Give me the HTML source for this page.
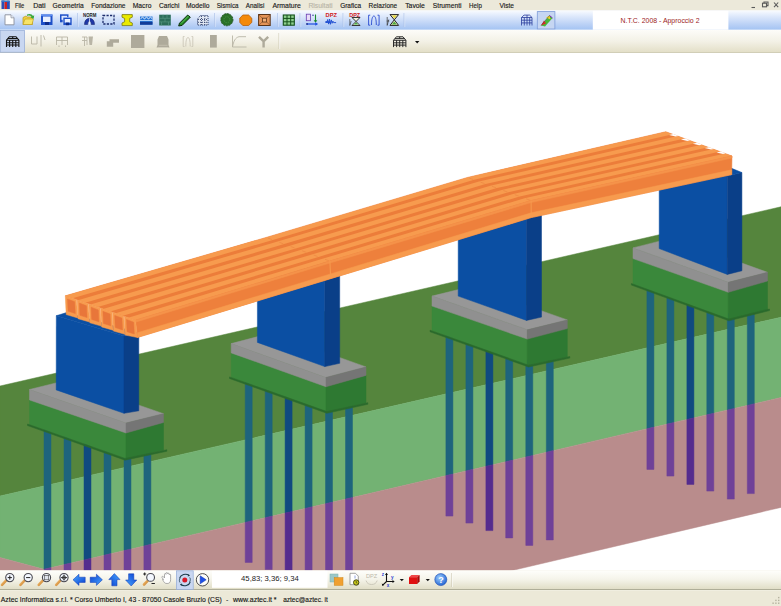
<!DOCTYPE html>
<html><head><meta charset="utf-8"><title>Aztec</title>
<style>
html,body{margin:0;padding:0;background:#fff;}
body{width:781px;height:606px;overflow:hidden;position:relative;font-family:"Liberation Sans","DejaVu Sans",sans-serif;}
svg text{font-family:"Liberation Sans","DejaVu Sans",sans-serif;}
#scene{position:absolute;left:0;top:0;width:781px;height:606px;}
</style></head><body>
<svg id="scene" width="781" height="606" viewBox="0 0 781 606">
<polygon points="0.0,386.0 781.0,206.8 781.0,317.2 0.0,496.0" fill="#55853d" stroke="#55853d" stroke-width="0.5" stroke-linejoin="round" />
<polygon points="0.0,496.0 781.0,317.2 781.0,397.5 44.0,569.3 0.0,557.5" fill="#73b273" stroke="#73b273" stroke-width="0.5" stroke-linejoin="round" />
<polygon points="0.0,557.5 44.0,569.3 781.0,397.5 781.0,507.4 510.0,571.0 0.0,571.0" fill="#b98c8c" stroke="#b98c8c" stroke-width="0.5" stroke-linejoin="round" />
<polygon points="44.0,426.0 51.0,426.0 51.0,567.6 44.0,569.2" fill="#1e647d" stroke="#1e647d" stroke-width="0.5" stroke-linejoin="round" />
<polygon points="44.0,569.2 51.0,567.6 51.0,580.0 44.0,580.0" fill="#6f4198" stroke="#6f4198" stroke-width="0.5" stroke-linejoin="round" />
<polygon points="64.0,433.0 71.0,433.0 71.0,563.0 64.0,564.6" fill="#1e647d" stroke="#1e647d" stroke-width="0.5" stroke-linejoin="round" />
<polygon points="64.0,564.6 71.0,563.0 71.0,580.0 64.0,580.0" fill="#6f4198" stroke="#6f4198" stroke-width="0.5" stroke-linejoin="round" />
<polygon points="84.0,440.0 91.0,440.0 91.0,558.3 84.0,559.9" fill="#104a80" stroke="#104a80" stroke-width="0.5" stroke-linejoin="round" />
<polygon points="84.0,559.9 91.0,558.3 91.0,580.0 84.0,580.0" fill="#552c8e" stroke="#552c8e" stroke-width="0.5" stroke-linejoin="round" />
<polygon points="104.0,447.0 111.0,447.0 111.0,553.6 104.0,555.3" fill="#1e647d" stroke="#1e647d" stroke-width="0.5" stroke-linejoin="round" />
<polygon points="104.0,555.3 111.0,553.6 111.0,580.0 104.0,580.0" fill="#6f4198" stroke="#6f4198" stroke-width="0.5" stroke-linejoin="round" />
<polygon points="124.0,452.9 131.0,452.9 131.0,549.0 124.0,550.6" fill="#1e647d" stroke="#1e647d" stroke-width="0.5" stroke-linejoin="round" />
<polygon points="124.0,550.6 131.0,549.0 131.0,580.0 124.0,580.0" fill="#6f4198" stroke="#6f4198" stroke-width="0.5" stroke-linejoin="round" />
<polygon points="143.9,448.7 150.9,448.7 150.9,544.3 143.9,546.0" fill="#1e647d" stroke="#1e647d" stroke-width="0.5" stroke-linejoin="round" />
<polygon points="143.9,546.0 150.9,544.3 150.9,580.0 143.9,580.0" fill="#6f4198" stroke="#6f4198" stroke-width="0.5" stroke-linejoin="round" />
<polygon points="245.2,378.7 252.2,378.7 252.2,520.7 245.2,522.4" fill="#1e647d" stroke="#1e647d" stroke-width="0.5" stroke-linejoin="round" />
<polygon points="245.2,522.4 252.2,520.7 252.2,562.4 245.2,562.4" fill="#6f4198" stroke="#6f4198" stroke-width="0.5" stroke-linejoin="round" />
<polygon points="265.2,385.8 272.2,385.8 272.2,516.1 265.2,517.7" fill="#1e647d" stroke="#1e647d" stroke-width="0.5" stroke-linejoin="round" />
<polygon points="265.2,517.7 272.2,516.1 272.2,569.6 265.2,569.6" fill="#6f4198" stroke="#6f4198" stroke-width="0.5" stroke-linejoin="round" />
<polygon points="285.1,392.9 292.1,392.9 292.1,511.4 285.1,513.1" fill="#104a80" stroke="#104a80" stroke-width="0.5" stroke-linejoin="round" />
<polygon points="285.1,513.1 292.1,511.4 292.1,580.0 285.1,580.0" fill="#552c8e" stroke="#552c8e" stroke-width="0.5" stroke-linejoin="round" />
<polygon points="305.1,400.0 312.1,400.0 312.1,506.8 305.1,508.4" fill="#1e647d" stroke="#1e647d" stroke-width="0.5" stroke-linejoin="round" />
<polygon points="305.1,508.4 312.1,506.8 312.1,580.0 305.1,580.0" fill="#6f4198" stroke="#6f4198" stroke-width="0.5" stroke-linejoin="round" />
<polygon points="325.5,406.0 332.5,406.0 332.5,502.0 325.5,503.7" fill="#1e647d" stroke="#1e647d" stroke-width="0.5" stroke-linejoin="round" />
<polygon points="325.5,503.7 332.5,502.0 332.5,580.0 325.5,580.0" fill="#6f4198" stroke="#6f4198" stroke-width="0.5" stroke-linejoin="round" />
<polygon points="345.5,401.7 352.5,401.7 352.5,497.4 345.5,499.0" fill="#1e647d" stroke="#1e647d" stroke-width="0.5" stroke-linejoin="round" />
<polygon points="345.5,499.0 352.5,497.4 352.5,580.0 345.5,580.0" fill="#6f4198" stroke="#6f4198" stroke-width="0.5" stroke-linejoin="round" />
<polygon points="445.9,332.1 452.9,332.1 452.9,474.0 445.9,475.6" fill="#1e647d" stroke="#1e647d" stroke-width="0.5" stroke-linejoin="round" />
<polygon points="445.9,475.6 452.9,474.0 452.9,516.1 445.9,516.1" fill="#6f4198" stroke="#6f4198" stroke-width="0.5" stroke-linejoin="round" />
<polygon points="465.9,339.2 472.9,339.2 472.9,469.3 465.9,470.9" fill="#1e647d" stroke="#1e647d" stroke-width="0.5" stroke-linejoin="round" />
<polygon points="465.9,470.9 472.9,469.3 472.9,523.1 465.9,523.1" fill="#6f4198" stroke="#6f4198" stroke-width="0.5" stroke-linejoin="round" />
<polygon points="485.9,346.3 492.9,346.3 492.9,464.7 485.9,466.3" fill="#104a80" stroke="#104a80" stroke-width="0.5" stroke-linejoin="round" />
<polygon points="485.9,466.3 492.9,464.7 492.9,530.6 485.9,530.6" fill="#552c8e" stroke="#552c8e" stroke-width="0.5" stroke-linejoin="round" />
<polygon points="505.7,353.3 512.7,353.3 512.7,460.0 505.7,461.7" fill="#1e647d" stroke="#1e647d" stroke-width="0.5" stroke-linejoin="round" />
<polygon points="505.7,461.7 512.7,460.0 512.7,537.9 505.7,537.9" fill="#6f4198" stroke="#6f4198" stroke-width="0.5" stroke-linejoin="round" />
<polygon points="525.8,360.0 532.8,360.0 532.8,455.4 525.8,457.0" fill="#1e647d" stroke="#1e647d" stroke-width="0.5" stroke-linejoin="round" />
<polygon points="525.8,457.0 532.8,455.4 532.8,545.4 525.8,545.4" fill="#6f4198" stroke="#6f4198" stroke-width="0.5" stroke-linejoin="round" />
<polygon points="546.3,355.7 553.3,355.7 553.3,450.6 546.3,452.2" fill="#1e647d" stroke="#1e647d" stroke-width="0.5" stroke-linejoin="round" />
<polygon points="546.3,452.2 553.3,450.6 553.3,539.9 546.3,539.9" fill="#6f4198" stroke="#6f4198" stroke-width="0.5" stroke-linejoin="round" />
<polygon points="646.9,285.4 653.9,285.4 653.9,427.1 646.9,428.8" fill="#1e647d" stroke="#1e647d" stroke-width="0.5" stroke-linejoin="round" />
<polygon points="646.9,428.8 653.9,427.1 653.9,469.4 646.9,469.4" fill="#6f4198" stroke="#6f4198" stroke-width="0.5" stroke-linejoin="round" />
<polygon points="666.9,292.7 673.9,292.7 673.9,422.5 666.9,424.1" fill="#1e647d" stroke="#1e647d" stroke-width="0.5" stroke-linejoin="round" />
<polygon points="666.9,424.1 673.9,422.5 673.9,476.1 666.9,476.1" fill="#6f4198" stroke="#6f4198" stroke-width="0.5" stroke-linejoin="round" />
<polygon points="686.9,300.0 693.9,300.0 693.9,417.8 686.9,419.5" fill="#104a80" stroke="#104a80" stroke-width="0.5" stroke-linejoin="round" />
<polygon points="686.9,419.5 693.9,417.8 693.9,484.4 686.9,484.4" fill="#552c8e" stroke="#552c8e" stroke-width="0.5" stroke-linejoin="round" />
<polygon points="706.8,307.3 713.8,307.3 713.8,413.2 706.8,414.8" fill="#1e647d" stroke="#1e647d" stroke-width="0.5" stroke-linejoin="round" />
<polygon points="706.8,414.8 713.8,413.2 713.8,491.1 706.8,491.1" fill="#6f4198" stroke="#6f4198" stroke-width="0.5" stroke-linejoin="round" />
<polygon points="727.3,313.5 734.3,313.5 734.3,408.4 727.3,410.0" fill="#1e647d" stroke="#1e647d" stroke-width="0.5" stroke-linejoin="round" />
<polygon points="727.3,410.0 734.3,408.4 734.3,499.1 727.3,499.1" fill="#6f4198" stroke="#6f4198" stroke-width="0.5" stroke-linejoin="round" />
<polygon points="747.3,308.6 754.3,308.6 754.3,403.7 747.3,405.4" fill="#1e647d" stroke="#1e647d" stroke-width="0.5" stroke-linejoin="round" />
<polygon points="747.3,405.4 754.3,403.7 754.3,493.6 747.3,493.6" fill="#6f4198" stroke="#6f4198" stroke-width="0.5" stroke-linejoin="round" />
<polygon points="29.5,400.0 126.0,433.0 126.0,458.8 29.5,424.4" fill="#3a883b" stroke="#3a883b" stroke-width="0.5" stroke-linejoin="round" />
<polygon points="126.0,433.0 163.5,422.5 163.5,450.1 126.0,458.8" fill="#2e7932" stroke="#2e7932" stroke-width="0.5" stroke-linejoin="round" />
<polygon points="27.5,424.0 125.0,458.4 166.8,449.7 166.8,451.3 125.0,460.2 27.5,425.6" fill="#2a6a2c" stroke="#2a6a2c" stroke-width="0.5" stroke-linejoin="round" />
<polygon points="29.5,389.5 67.0,380.2 163.5,413.7 126.0,423.0" fill="#979797" stroke="#979797" stroke-width="0.5" stroke-linejoin="round" />
<polygon points="29.5,389.5 126.0,423.0 126.0,433.0 29.5,400.0" fill="#909090" stroke="#909090" stroke-width="0.5" stroke-linejoin="round" />
<polygon points="126.0,423.0 163.5,413.7 163.5,422.5 126.0,433.0" fill="#757575" stroke="#757575" stroke-width="0.5" stroke-linejoin="round" />
<polygon points="231.2,352.9 326.0,386.8 326.0,411.9 231.2,377.3" fill="#3a883b" stroke="#3a883b" stroke-width="0.5" stroke-linejoin="round" />
<polygon points="326.0,386.8 366.0,375.4 366.0,403.1 326.0,411.9" fill="#2e7932" stroke="#2e7932" stroke-width="0.5" stroke-linejoin="round" />
<polygon points="229.5,376.9 326.8,411.5 367.8,402.7 367.8,404.3 326.8,413.3 229.5,378.5" fill="#2a6a2c" stroke="#2a6a2c" stroke-width="0.5" stroke-linejoin="round" />
<polygon points="231.2,343.6 271.2,333.1 366.0,366.9 326.0,377.4" fill="#979797" stroke="#979797" stroke-width="0.5" stroke-linejoin="round" />
<polygon points="231.2,343.6 326.0,377.4 326.0,386.8 231.2,352.9" fill="#909090" stroke="#909090" stroke-width="0.5" stroke-linejoin="round" />
<polygon points="326.0,377.4 366.0,366.9 366.0,375.4 326.0,386.8" fill="#757575" stroke="#757575" stroke-width="0.5" stroke-linejoin="round" />
<polygon points="432.0,306.1 527.3,339.1 527.3,365.6 432.0,330.6" fill="#3a883b" stroke="#3a883b" stroke-width="0.5" stroke-linejoin="round" />
<polygon points="527.3,339.1 567.3,328.6 567.3,356.9 527.3,365.6" fill="#2e7932" stroke="#2e7932" stroke-width="0.5" stroke-linejoin="round" />
<polygon points="430.0,330.2 528.6,365.2 569.8,356.5 569.8,358.1 528.6,367.0 430.0,331.8" fill="#2a6a2c" stroke="#2a6a2c" stroke-width="0.5" stroke-linejoin="round" />
<polygon points="432.0,296.1 472.0,286.2 567.3,319.9 527.3,329.8" fill="#979797" stroke="#979797" stroke-width="0.5" stroke-linejoin="round" />
<polygon points="432.0,296.1 527.3,329.8 527.3,339.1 432.0,306.1" fill="#909090" stroke="#909090" stroke-width="0.5" stroke-linejoin="round" />
<polygon points="527.3,329.8 567.3,319.9 567.3,328.6 527.3,339.1" fill="#757575" stroke="#757575" stroke-width="0.5" stroke-linejoin="round" />
<polygon points="633.0,258.6 728.3,292.3 728.3,319.4 633.0,283.9" fill="#3a883b" stroke="#3a883b" stroke-width="0.5" stroke-linejoin="round" />
<polygon points="728.3,292.3 767.5,281.1 767.5,309.4 728.3,319.4" fill="#2e7932" stroke="#2e7932" stroke-width="0.5" stroke-linejoin="round" />
<polygon points="631.4,283.5 728.8,319.0 769.5,309.0 769.5,310.6 728.8,320.8 631.4,285.1" fill="#2a6a2c" stroke="#2a6a2c" stroke-width="0.5" stroke-linejoin="round" />
<polygon points="633.0,247.9 672.2,237.9 767.5,272.3 728.3,282.3" fill="#979797" stroke="#979797" stroke-width="0.5" stroke-linejoin="round" />
<polygon points="633.0,247.9 728.3,282.3 728.3,292.3 633.0,258.6" fill="#909090" stroke="#909090" stroke-width="0.5" stroke-linejoin="round" />
<polygon points="728.3,282.3 767.5,272.3 767.5,281.1 728.3,292.3" fill="#757575" stroke="#757575" stroke-width="0.5" stroke-linejoin="round" />
<polygon points="56.3,315.7 124.0,336.0 124.0,413.3 56.2,389.9" fill="#0b4fa3" stroke="#0b4fa3" stroke-width="0.5" stroke-linejoin="round" />
<polygon points="124.0,336.0 138.8,333.0 138.8,410.8 124.0,413.3" fill="#0a3f88" stroke="#0a3f88" stroke-width="0.5" stroke-linejoin="round" />
<polygon points="257.4,280.0 324.8,262.0 324.8,366.6 257.4,342.4" fill="#0b4fa3" stroke="#0b4fa3" stroke-width="0.5" stroke-linejoin="round" />
<polygon points="324.8,262.0 339.7,268.0 339.7,363.3 324.8,366.6" fill="#0a3f88" stroke="#0a3f88" stroke-width="0.5" stroke-linejoin="round" />
<polygon points="458.2,225.0 526.5,205.0 526.5,320.4 458.2,296.1" fill="#0b4fa3" stroke="#0b4fa3" stroke-width="0.5" stroke-linejoin="round" />
<polygon points="526.5,205.0 541.5,212.0 541.5,317.1 526.5,320.4" fill="#0a3f88" stroke="#0a3f88" stroke-width="0.5" stroke-linejoin="round" />
<polygon points="659.2,180.0 727.3,173.7 727.3,274.4 659.2,248.6" fill="#0b4fa3" stroke="#0b4fa3" stroke-width="0.5" stroke-linejoin="round" />
<polygon points="727.3,176.0 741.9,172.5 741.9,270.8 727.3,274.4" fill="#0a3f88" stroke="#0a3f88" stroke-width="0.5" stroke-linejoin="round" />
<polygon points="727.3,176.0 741.9,172.5 731.6,168.3 717.0,171.8" fill="#0b4fa3" stroke="#0b4fa3" stroke-width="0.5" stroke-linejoin="round" />
<polygon points="56.3,315.7 66.5,312.6 139.0,333.0 124.0,336.0" fill="#0b4fa3" stroke="#0b4fa3" stroke-width="0.5" stroke-linejoin="round" />
<polygon points="65.3,295.8 266.2,237.4 467.5,177.4 665.8,131.7 732.0,156.0 531.1,200.6 329.9,261.1 135.5,320.2" fill="#ec7d3a" stroke="#ec7d3a" stroke-width="0.5" stroke-linejoin="round" />
<polygon points="65.3,295.8 266.2,237.4 467.5,177.4 665.8,131.7 672.7,134.2 474.1,179.8 272.8,239.9 72.6,298.3" fill="#f79b4e"  />
<polygon points="77.9,300.2 277.6,241.6 478.9,181.6 677.7,136.1 684.5,138.6 485.5,184.0 284.2,244.1 85.2,302.7" fill="#f79b4e"  />
<polygon points="90.5,304.5 289.0,245.9 490.3,185.7 689.5,140.4 696.4,142.9 496.9,188.1 295.7,248.4 97.8,307.1" fill="#f79b4e"  />
<polygon points="103.0,308.9 300.4,250.1 501.7,189.9 701.4,144.8 708.3,147.3 508.3,192.3 307.1,252.6 110.3,311.5" fill="#f79b4e"  />
<polygon points="115.6,313.3 311.9,254.4 513.1,194.0 713.3,149.1 720.1,151.6 519.7,196.4 318.5,256.9 122.9,315.8" fill="#f79b4e"  />
<polygon points="128.2,317.7 323.3,258.6 524.5,198.2 725.1,153.5 732.0,156.0 531.1,200.6 329.9,261.1 135.5,320.2" fill="#f79b4e"  />
<polygon points="673.3,134.1 678.3,135.9 675.5,136.6 669.1,135.1" fill="#ffffff"  />
<polygon points="685.1,138.4 690.1,140.3 687.4,140.9 680.9,139.4" fill="#ffffff"  />
<polygon points="697.0,142.8 702.0,144.6 699.2,145.3 692.8,143.8" fill="#ffffff"  />
<polygon points="708.9,147.2 713.9,149.0 711.1,149.6 704.7,148.1" fill="#ffffff"  />
<polygon points="720.7,151.5 725.7,153.3 723.0,154.0 716.5,152.5" fill="#ffffff"  />
<line x1="267.9" y1="238.0" x2="271.9" y2="239.5" stroke="#ee8a44" stroke-width="0.8"/>
<line x1="279.3" y1="242.3" x2="283.3" y2="243.8" stroke="#ee8a44" stroke-width="0.8"/>
<line x1="290.7" y1="246.5" x2="294.7" y2="248.0" stroke="#ee8a44" stroke-width="0.8"/>
<line x1="302.2" y1="250.8" x2="306.2" y2="252.3" stroke="#ee8a44" stroke-width="0.8"/>
<line x1="313.6" y1="255.0" x2="317.6" y2="256.5" stroke="#ee8a44" stroke-width="0.8"/>
<line x1="325.0" y1="259.3" x2="329.0" y2="260.8" stroke="#ee8a44" stroke-width="0.8"/>
<line x1="469.2" y1="178.0" x2="473.2" y2="179.5" stroke="#ee8a44" stroke-width="0.8"/>
<line x1="480.6" y1="182.2" x2="484.6" y2="183.6" stroke="#ee8a44" stroke-width="0.8"/>
<line x1="492.0" y1="186.3" x2="496.0" y2="187.8" stroke="#ee8a44" stroke-width="0.8"/>
<line x1="503.4" y1="190.5" x2="507.4" y2="192.0" stroke="#ee8a44" stroke-width="0.8"/>
<line x1="514.8" y1="194.7" x2="518.8" y2="196.1" stroke="#ee8a44" stroke-width="0.8"/>
<line x1="526.2" y1="198.8" x2="530.2" y2="200.3" stroke="#ee8a44" stroke-width="0.8"/>
<polygon points="135.5,320.2 329.9,261.1 531.1,200.6 732.0,156.0 731.7,174.6 531.2,217.6 330.5,278.7 137.4,337.5" fill="#ee803c" stroke="#ee803c" stroke-width="0.5" stroke-linejoin="round" />
<polygon points="137.4,332.7 330.5,273.9 531.2,212.8 731.7,169.8 731.7,174.6 531.2,217.6 330.5,278.7 137.4,337.5" fill="#f79b4e" stroke="#f79b4e" stroke-width="0.5" stroke-linejoin="round" />
<polygon points="135.5,320.2 329.9,261.1 531.1,200.6 732.0,156.0 732.0,158.0 531.1,202.6 329.9,263.1 135.5,322.2" fill="#f5934a" stroke="#f5934a" stroke-width="0.5" stroke-linejoin="round" />
<line x1="329.9" y1="261.1" x2="330.5" y2="275.7" stroke="#f79b4e" stroke-width="1"/>
<line x1="531.1" y1="200.6" x2="531.2" y2="214.6" stroke="#f79b4e" stroke-width="1"/>
<polygon points="65.3,295.8 76.5,299.7 77.7,317.9 66.2,314.6" fill="#f79b4e" stroke="#f79b4e" stroke-width="0.5" stroke-linejoin="round" />
<polygon points="67.5,299.0 74.7,301.7 75.3,313.5 68.1,311.2" fill="#e8763a" stroke="#e8763a" stroke-width="0.5" stroke-linejoin="round" />
<polygon points="77.1,299.9 88.3,303.8 89.5,322.0 78.0,318.7" fill="#f79b4e" stroke="#f79b4e" stroke-width="0.5" stroke-linejoin="round" />
<polygon points="79.3,303.1 86.5,305.8 87.1,317.6 79.9,315.3" fill="#e8763a" stroke="#e8763a" stroke-width="0.5" stroke-linejoin="round" />
<polygon points="88.9,304.0 100.1,307.9 101.3,326.1 89.8,322.8" fill="#f79b4e" stroke="#f79b4e" stroke-width="0.5" stroke-linejoin="round" />
<polygon points="91.1,307.2 98.3,309.9 98.9,321.7 91.7,319.4" fill="#e8763a" stroke="#e8763a" stroke-width="0.5" stroke-linejoin="round" />
<polygon points="100.7,308.1 111.9,312.0 113.1,330.2 101.6,326.9" fill="#f79b4e" stroke="#f79b4e" stroke-width="0.5" stroke-linejoin="round" />
<polygon points="102.9,311.3 110.1,314.0 110.7,325.8 103.5,323.5" fill="#e8763a" stroke="#e8763a" stroke-width="0.5" stroke-linejoin="round" />
<polygon points="112.5,312.2 123.7,316.1 124.9,334.3 113.4,331.0" fill="#f79b4e" stroke="#f79b4e" stroke-width="0.5" stroke-linejoin="round" />
<polygon points="114.7,315.4 121.9,318.1 122.5,329.9 115.3,327.6" fill="#e8763a" stroke="#e8763a" stroke-width="0.5" stroke-linejoin="round" />
<polygon points="124.3,316.3 135.5,320.2 137.4,337.5 125.2,335.1" fill="#f79b4e" stroke="#f79b4e" stroke-width="0.5" stroke-linejoin="round" />
<polygon points="126.5,319.5 133.7,322.2 134.3,334.0 127.1,331.7" fill="#e8763a" stroke="#e8763a" stroke-width="0.5" stroke-linejoin="round" />
<defs>
<linearGradient id="gTb1" x1="0" y1="0" x2="0" y2="1"><stop offset="0" stop-color="#f8fbff"/><stop offset="0.3" stop-color="#dde8fb"/><stop offset="0.7" stop-color="#bcd2f6"/><stop offset="1" stop-color="#a3c3f3"/></linearGradient>
<linearGradient id="gTb2" x1="0" y1="0" x2="0" y2="1"><stop offset="0" stop-color="#fdfcf9"/><stop offset="0.5" stop-color="#f3f1e6"/><stop offset="1" stop-color="#e2dec6"/></linearGradient>
<linearGradient id="gTb3" x1="0" y1="0" x2="0" y2="1"><stop offset="0" stop-color="#fefefb"/><stop offset="0.45" stop-color="#f5f4ea"/><stop offset="1" stop-color="#dfdcc4"/></linearGradient>
<linearGradient id="gArr" x1="0" y1="0" x2="1" y2="1"><stop offset="0" stop-color="#4aa8ff"/><stop offset="1" stop-color="#0a3fd0"/></linearGradient>
<radialGradient id="gHelp" cx="0.4" cy="0.35" r="0.7"><stop offset="0" stop-color="#9fd0ff"/><stop offset="1" stop-color="#1c5fd0"/></radialGradient>
<linearGradient id="gHandle" x1="0" y1="0" x2="1" y2="1"><stop offset="0" stop-color="#f5c070"/><stop offset="1" stop-color="#c88030"/></linearGradient>
</defs>
<rect x="0" y="0" width="781" height="10.6" fill="#ece9da" />
<g><rect x="1.5" y="0.5" width="3" height="8.5" fill="#2a4fb8"/><rect x="4.5" y="2" width="2.5" height="7" fill="#d02020"/><rect x="7" y="0.8" width="2.8" height="8.2" fill="#2a4fb8"/><rect x="1.5" y="0.5" width="8" height="1.5" fill="#3a78c8"/></g>
<text x="14.9" y="7.6" font-size="7.2" fill="#1a1a1a" stroke="#1a1a1a" stroke-width="0.15" textLength="9.3" lengthAdjust="spacingAndGlyphs">File</text>
<text x="33.2" y="7.6" font-size="7.2" fill="#1a1a1a" stroke="#1a1a1a" stroke-width="0.15" textLength="12.4" lengthAdjust="spacingAndGlyphs">Dati</text>
<text x="52.5" y="7.6" font-size="7.2" fill="#1a1a1a" stroke="#1a1a1a" stroke-width="0.15" textLength="31.1" lengthAdjust="spacingAndGlyphs">Geometria</text>
<text x="91.3" y="7.6" font-size="7.2" fill="#1a1a1a" stroke="#1a1a1a" stroke-width="0.15" textLength="34.2" lengthAdjust="spacingAndGlyphs">Fondazione</text>
<text x="132.7" y="7.6" font-size="7.2" fill="#1a1a1a" stroke="#1a1a1a" stroke-width="0.15" textLength="18.7" lengthAdjust="spacingAndGlyphs">Macro</text>
<text x="159" y="7.6" font-size="7.2" fill="#1a1a1a" stroke="#1a1a1a" stroke-width="0.15" textLength="20.4" lengthAdjust="spacingAndGlyphs">Carichi</text>
<text x="186" y="7.6" font-size="7.2" fill="#1a1a1a" stroke="#1a1a1a" stroke-width="0.15" textLength="23.5" lengthAdjust="spacingAndGlyphs">Modello</text>
<text x="216.7" y="7.6" font-size="7.2" fill="#1a1a1a" stroke="#1a1a1a" stroke-width="0.15" textLength="21.8" lengthAdjust="spacingAndGlyphs">Sismica</text>
<text x="245.8" y="7.6" font-size="7.2" fill="#1a1a1a" stroke="#1a1a1a" stroke-width="0.15" textLength="18.6" lengthAdjust="spacingAndGlyphs">Analisi</text>
<text x="272.4" y="7.6" font-size="7.2" fill="#1a1a1a" stroke="#1a1a1a" stroke-width="0.15" textLength="28.4" lengthAdjust="spacingAndGlyphs">Armature</text>
<text x="308.4" y="7.6" font-size="7.2" fill="#b8b5a8" stroke="#b8b5a8" stroke-width="0.15" textLength="24.2" lengthAdjust="spacingAndGlyphs">Risultati</text>
<text x="340.2" y="7.6" font-size="7.2" fill="#1a1a1a" stroke="#1a1a1a" stroke-width="0.15" textLength="20.8" lengthAdjust="spacingAndGlyphs">Grafica</text>
<text x="368.5" y="7.6" font-size="7.2" fill="#1a1a1a" stroke="#1a1a1a" stroke-width="0.15" textLength="28.7" lengthAdjust="spacingAndGlyphs">Relazione</text>
<text x="405.2" y="7.6" font-size="7.2" fill="#1a1a1a" stroke="#1a1a1a" stroke-width="0.15" textLength="19.7" lengthAdjust="spacingAndGlyphs">Tavole</text>
<text x="432.8" y="7.6" font-size="7.2" fill="#1a1a1a" stroke="#1a1a1a" stroke-width="0.15" textLength="28.7" lengthAdjust="spacingAndGlyphs">Strumenti</text>
<text x="469.1" y="7.6" font-size="7.2" fill="#1a1a1a" stroke="#1a1a1a" stroke-width="0.15" textLength="12.8" lengthAdjust="spacingAndGlyphs">Help</text>
<text x="499.5" y="7.6" font-size="7.2" fill="#1a1a1a" stroke="#1a1a1a" stroke-width="0.15" textLength="14.5" lengthAdjust="spacingAndGlyphs">Viste</text>
<g stroke="#5a5a5a" stroke-width="1.1" fill="none"><path d="M751.5 7.5h3.5"/><rect x="762.5" y="3.2" width="4" height="3.6"/><path d="M764 3.2v-1.2h4v3.6h-1.5"/><path d="M774 2.5l4.2 4.6M778.2 2.5l-4.2 4.6"/></g>
<rect x="0" y="10.6" width="781" height="19.2" fill="url(#gTb1)" />
<rect x="0" y="10.6" width="781" height="0.7" fill="#f6f8fc" />
<rect x="592.8" y="10.8" width="135.6" height="19" fill="#ffffff" />
<text x="620.5" y="23.2" font-size="7.4" fill="#9c1c24" textLength="79" lengthAdjust="spacingAndGlyphs">N.T.C. 2008 - Approccio 2</text>
<path d="M77.5 13v14" stroke="#a9bfe6" stroke-width="0.7"/><path d="M78.3 13v14" stroke="#e6eefb" stroke-width="0.5"/>
<path d="M214.5 13v14" stroke="#a9bfe6" stroke-width="0.7"/><path d="M215.3 13v14" stroke="#e6eefb" stroke-width="0.5"/>
<path d="M277.5 13v14" stroke="#a9bfe6" stroke-width="0.7"/><path d="M278.3 13v14" stroke="#e6eefb" stroke-width="0.5"/>
<path d="M300 13v14" stroke="#a9bfe6" stroke-width="0.7"/><path d="M300.8 13v14" stroke="#e6eefb" stroke-width="0.5"/>
<path d="M343 13v14" stroke="#a9bfe6" stroke-width="0.7"/><path d="M343.8 13v14" stroke="#e6eefb" stroke-width="0.5"/>
<path d="M404 13v14" stroke="#a9bfe6" stroke-width="0.7"/><path d="M404.8 13v14" stroke="#e6eefb" stroke-width="0.5"/>
<path d="M5 14.8h6l3 3v7h-9z" fill="#fff" stroke="#8a8f9c" stroke-width="0.9"/><path d="M11 14.8v3h3" fill="#e8ecf4" stroke="#8a8f9c" stroke-width="0.7"/>
<path d="M23 17.5l3-1.5 1.5 1h5v7.5h-9.5z" fill="#f0d040" stroke="#b89820" stroke-width="0.7"/><path d="M23 24.5l2-5.5h8.5l-1.5 5.5z" fill="#f8e468" stroke="#b89820" stroke-width="0.6"/><path d="M27 14.5c2.5-1.2 5-0.5 6 1.5l1.2-0.8-0.5 3.6-3.3-1.3 1.1-0.7c-1-1.2-2.6-1.6-4.5-0.8z" fill="#38a838"/>
<rect x="41" y="14.5" width="11.5" height="10.5" fill="#1e50c8"/><rect x="43" y="16.5" width="7.5" height="5.5" fill="#e8f0ff"/><rect x="45" y="22" width="4" height="3" fill="#0c2c8c"/><rect x="41" y="14.5" width="11.5" height="1.6" fill="#5c8cf0"/>
<rect x="60" y="14.3" width="8.5" height="8" fill="#1e50c8"/><rect x="61.5" y="15.8" width="5.5" height="4" fill="#dfe9ff"/><rect x="63" y="17.2" width="9" height="8.3" fill="#1e50c8" stroke="#dfe9ff" stroke-width="0.6"/><rect x="64.7" y="19" width="5.6" height="3.6" fill="#e8f0ff"/><rect x="66" y="22.6" width="3" height="2.6" fill="#0c2c8c"/>
<text x="83" y="17.2" font-size="4.6" font-weight="bold" fill="#222" textLength="13.5" lengthAdjust="spacingAndGlyphs">NORM</text>
<path d="M84.5 24.5c0-4 2-6 5-6.2 3 .2 5 2.2 5 6.2h-3.2c0-2-.6-3-1.8-3.4-1.2.4-1.8 1.4-1.8 3.4z" fill="#2038a8" stroke="#101c60" stroke-width="0.5"/><path d="M89.5 18.3v6" stroke="#fff" stroke-width="0.7"/>
<rect x="103" y="15.5" width="11" height="8.5" fill="none" stroke="#1c2c6c" stroke-width="1.3" stroke-dasharray="2.2 1.3"/>
<path d="M122 14.6h10.3v2.6l-2.6 1.2v3.4l2.6 1.2v2.6h-10.3v-2.6l2.6-1.2v-3.4l-2.6-1.2z" fill="#eaea00" stroke="#7a7a10" stroke-width="0.8"/>
<rect x="140" y="16.5" width="12.5" height="8.2" fill="#2a78d8"/><rect x="140" y="21.8" width="12.5" height="2.9" fill="#123c98"/><path d="M140.5 18.8l2-1.6 2 1.6 2-1.6 2 1.6 2-1.6 1.6 1.4" stroke="#fff" stroke-width="0.9" fill="none"/><rect x="140" y="20" width="12.5" height="0.9" fill="#bfe0ff"/>
<rect x="159.2" y="14.7" width="11.6" height="10.8" fill="#2c6e5a"/><path d="M159.2 18.3h11.6M159.2 21.9h11.6M163 14.7v3.6M167 14.7v3.6M165 18.3v3.6M161.5 21.9v3.6M168.5 21.9v3.6" stroke="#5a9a86" stroke-width="0.6"/>
<path d="M179.5 23.2l8.2-8.2 2.6 2.2-8.2 8.2-3.4 0.6z" fill="#238a23" stroke="#0c2c0c" stroke-width="1"/><path d="M181 23.5l8-8" stroke="#7ad07a" stroke-width="0.7"/>
<path d="M200.5 15.5h7.5v9.5h-10.5v-6z" fill="#dfe6f2" stroke="#1c2c5c" stroke-width="0.9" stroke-dasharray="1.1 0.9"/><path d="M198 19.5h10M198 22.3h10M201.5 16v9M204.8 16v9" stroke="#1c2c5c" stroke-width="0.8" stroke-dasharray="1 1"/>
<circle cx="226.9" cy="19.7" r="6.1" fill="#2a7028" stroke="#1a4a18" stroke-width="0.8" stroke-dasharray="2 0.8"/><circle cx="226.9" cy="19.7" r="3" fill="none" stroke="#4a9a48" stroke-width="0.8" stroke-dasharray="1.2 1.2"/>
<path d="M242.8 15h5.8l3.2 3.2v4.2l-3.2 3.1h-5.8l-3-3.1v-4.2z" fill="#f48a0c" stroke="#b8600a" stroke-width="0.8"/>
<rect x="258.6" y="14.5" width="11.6" height="11" fill="#e49458" stroke="#5a3418" stroke-width="1"/><path d="M258.6 14.5l4 4M270.2 14.5l-4 4M258.6 25.5l4-4M270.2 25.5l-4-4" stroke="#7a4a28" stroke-width="0.6"/><rect x="262.4" y="18.2" width="4" height="3.8" fill="#f2b078" stroke="#5a3418" stroke-width="0.8"/>
<rect x="283.3" y="15" width="11" height="10.2" fill="#8ed08e" stroke="#14501a" stroke-width="1.1"/><path d="M287 15v10.2M290.7 15v10.2M283.3 18.4h11M283.3 21.8h11" stroke="#14501a" stroke-width="1"/>
<rect x="306.3" y="14.2" width="4.2" height="6.5" fill="#e8dcf8" stroke="#6a3cb0" stroke-width="0.8"/><path d="M315.5 14.5v7" stroke="#1a8a2a" stroke-width="1.1"/><path d="M313.7 20.2l1.8 2.6 1.8-2.6z" fill="#1a8a2a"/><path d="M307 24h9" stroke="#1c4ce0" stroke-width="1.2"/><path d="M315.3 22.2l2.8 1.8-2.8 1.8z" fill="#1c4ce0"/><circle cx="307" cy="24" r="0.9" fill="#1c2c8c"/><circle cx="313" cy="15.2" r="0.7" fill="#1c2c8c"/>
<text x="325.5" y="17.4" font-size="4.8" font-weight="bold" fill="#d01818" textLength="11.5" lengthAdjust="spacingAndGlyphs">DPZ</text><path d="M325.5 22h1.5l.7-2.5.9 4.6.9-5 .9 5.2.9-4.4.8 3.4.8-2.2.7 1.5h2.5" stroke="#1c4cd0" stroke-width="0.9" fill="none"/><rect x="325.5" y="21.3" width="5" height="1.6" fill="#1c4cd0"/>
<text x="349.2" y="17" font-size="4.6" font-weight="bold" fill="#d01818" textLength="11" lengthAdjust="spacingAndGlyphs">DPZ</text><path d="M352 17.5h8l-4 4 4 4h-8l4-4z" fill="#f4f4e0" stroke="#222" stroke-width="0.9"/><path d="M353.8 24.6h4.4l-2.2-2.2z" fill="#38a838"/><path d="M349.8 19v6.5M351.2 21l-1.4 4.5" stroke="#444" stroke-width="0.7"/>
<path d="M370.2 15.2h-1.6v10h1.6M377.5 15.2h1.6v10h-1.6" stroke="#2a4cd0" stroke-width="0.9" fill="none"/><path d="M371.5 25c0-6 1-9 2.4-9s2.4 3 2.4 9" stroke="#2a4cd0" stroke-width="0.9" fill="none"/>
<path d="M390 14.6h8.6l-4.3 5.2 4.3 5.6h-8.6l4.3-5.6z" fill="#f4f0c8" stroke="#222" stroke-width="1"/><path d="M391.8 24.6h5l-2.5-3z" fill="#48a838"/><path d="M392 15.5h4.8l-2.4 2.8z" fill="#e8d838"/><path d="M387.2 17v8.4M388.8 19.5l-1.6 5.9M386.7 21h2.6" stroke="#333" stroke-width="0.7"/>
<g stroke="#2a3c9c" stroke-width="0.8" fill="none"><path d="M521.5 25.5v-8l2.5-2.4h5.5l2.5 2.4v8"/><path d="M521.5 17.5h10.5M521.5 20.2h10.5M521.5 22.9h10.5M524.3 17.5v8M527 15.1v10.4M529.7 17.5v8"/></g>
<rect x="537.3" y="11.6" width="17.6" height="17.4" fill="#c6d6f2" stroke="#7e9cd8" stroke-width="0.8"/>
<path d="M541 25.5l8.5-10 3 2.5-7.5 8.5z" fill="#48b838"/><path d="M541 25.5l5-2 -2-3z" fill="#e02828"/><path d="M546 17.5l3.5-2 1 4z" fill="#f0d028"/><path d="M549.5 15.5l3 2.5" stroke="#7a2ab0" stroke-width="1"/><path d="M541 25.5l8.5-10" stroke="#444" stroke-width="0.5"/>
<rect x="0" y="29.8" width="781" height="22.9" fill="url(#gTb2)" />
<rect x="0" y="52.0" width="781" height="0.8" fill="#cbc7b0" />
<rect x="0.2" y="30.4" width="24.4" height="21.8" fill="#c9d7f1" stroke="#93aad6" stroke-width="0.7"/>
<g stroke="#111" stroke-width="1.1" fill="none" transform="translate(6.2,36.2)"><path d="M0.3 10.8v-6.8l2.9-3.5h6.6l2.9 3.5v6.8"/><path d="M0.3 4h12.4M0.3 6.5h12.4M0.3 8.8h12.4M3.4 4v6.8M6.5 4v6.8M9.6 4v6.8M1.7 2.3h9.6M6.5 0.5v1.8"/></g>
<g stroke="#222" stroke-width="0.95" fill="none" transform="translate(393.2,36.3)"><path d="M0.3 10.8v-6.8l2.9-3.5h6.6l2.9 3.5v6.8"/><path d="M0.3 4h12.4M0.3 6.5h12.4M0.3 8.8h12.4M3.4 4v6.8M6.5 4v6.8M9.6 4v6.8M1.7 2.3h9.6M6.5 0.5v1.8"/></g>
<path d="M415 41l2.2 2.4 2.2-2.4z" fill="#111"/>
<path d="M31.5 36.5v7.5h5.5v-7.5M41 35v11.5M43.5 35.5l1.5 4.5" stroke="#b9b5a6" stroke-width="0.9" fill="none"/>
<path d="M56.5 45v-8h11v8M56.5 40.5h11M62 37v8M59 45.5v1.5M65.5 45.5v1.5" stroke="#b9b5a6" stroke-width="0.9" fill="none"/>
<path d="M82 37h5v8M82 40.5h5M84.5 37v9" stroke="#b9b5a6" stroke-width="0.9" fill="none"/><path d="M88.5 36.5h4.5l-1 8.5h-2.5z" fill="#b9b5a6"/>
<path d="M109.5 39.3h9.5v3.4h-5.8v4h-6.4v-5.4h2.7z" fill="#aeaa9b"/>
<rect x="131" y="35" width="13.4" height="13" fill="#aeaa9b"/>
<path d="M159 36h8l1.5 3.5v5.5l1 2.5h-13l1-2.5v-5.5z" fill="#aeaa9b"/><path d="M158 47.5h10M159 45.3h8.5" stroke="#d8d4c4" stroke-width="0.5"/>
<path d="M184.5 36.5h-1.3v10h1.3M191.5 36.5h1.3v10h-1.3M185.8 46.5c0-6 .8-9 2.2-9s2.2 3 2.2 9" stroke="#c6c2b4" stroke-width="0.8" fill="none"/>
<rect x="210" y="35" width="6.8" height="12.6" fill="#aeaa9b"/>
<path d="M232.5 35.5v11.5h14M232.5 47c1-6 3-9.5 6.5-10.3h7" stroke="#b9b5a6" stroke-width="0.9" fill="none"/>
<path d="M259 36.8l4.6 4.6 4.6-4.6M263.6 41v6.5" stroke="#aeaa9b" stroke-width="2.4" fill="none"/>
<path d="M278.9 33v16" stroke="#cfcbb8" stroke-width="0.8"/><path d="M279.7 33v16" stroke="#fff" stroke-width="0.6"/>
<rect x="0" y="570.5" width="781" height="19.3" fill="url(#gTb3)" />
<rect x="0" y="570.3" width="781" height="0.7" fill="#f8f7f0" />
<rect x="0" y="589.6" width="781" height="16.4" fill="#ece9d8" />
<rect x="0" y="589.1" width="781" height="0.9" fill="#a9a891" />
<rect x="0" y="590.0" width="781" height="0.6" fill="#f4f2e6" />
<path d="M2.0 584.8l4.2-4.4" stroke="url(#gHandle)" stroke-width="2.6" stroke-linecap="round"/><circle cx="9.8" cy="577.6" r="4.1" fill="#f4f8ff" stroke="#4a4a52" stroke-width="1.1"/><path d="M9.8 575.5v4.2M7.7 577.6h4.2" stroke="#222" stroke-width="1"/>
<path d="M20.4 584.8l4.2-4.4" stroke="url(#gHandle)" stroke-width="2.6" stroke-linecap="round"/><circle cx="28.2" cy="577.6" r="4.1" fill="#f4f8ff" stroke="#4a4a52" stroke-width="1.1"/><path d="M26.1 577.6h4.2" stroke="#222" stroke-width="1"/>
<path d="M38.7 584.8l4.2-4.4" stroke="url(#gHandle)" stroke-width="2.6" stroke-linecap="round"/><circle cx="46.5" cy="577.6" r="4.1" fill="#f4f8ff" stroke="#4a4a52" stroke-width="1.1"/><rect x="44.3" y="575.4" width="4.4" height="4.4" fill="#dfe4ee" stroke="#555" stroke-width="0.7"/>
<path d="M56.2 584.8l4.2-4.4" stroke="url(#gHandle)" stroke-width="2.6" stroke-linecap="round"/><circle cx="64" cy="577.6" r="4.1" fill="#f4f8ff" stroke="#4a4a52" stroke-width="1.1"/><path d="M64 574.6v6M61 577.6h6" stroke="#222" stroke-width="0.9"/><circle cx="64" cy="577.6" r="1.7" fill="none" stroke="#222" stroke-width="0.7"/>
<path transform="translate(79.2,579.8) rotate(0)" d="M-6.2 0l6-5.6v3h6.2v5.2h-6.2v3z" fill="url(#gArr)" stroke="#0a34b0" stroke-width="0.5"/>
<path transform="translate(96.2,579.8) rotate(180)" d="M-6.2 0l6-5.6v3h6.2v5.2h-6.2v3z" fill="url(#gArr)" stroke="#0a34b0" stroke-width="0.5"/>
<path transform="translate(114.4,579.8) rotate(90)" d="M-6.2 0l6-5.6v3h6.2v5.2h-6.2v3z" fill="url(#gArr)" stroke="#0a34b0" stroke-width="0.5"/>
<path transform="translate(131.2,579.8) rotate(270)" d="M-6.2 0l6-5.6v3h6.2v5.2h-6.2v3z" fill="url(#gArr)" stroke="#0a34b0" stroke-width="0.5"/>
<path d="M144 584.5l4-4.2" stroke="url(#gHandle)" stroke-width="2.6" stroke-linecap="round"/><circle cx="150.6" cy="577.4" r="3.9" fill="#f4f8ff" stroke="#4a4a52" stroke-width="1.1"/><path d="M143.2 574h3M144.7 572.5v3M151.5 583.5h3.4" stroke="#111" stroke-width="0.9"/>
<path d="M163.5 579.5l-1.5-2c-.5-1 .8-1.6 1.4-.8l1.1 1.2v-3.6c0-1 1.4-1 1.5 0v-1c.1-1 1.5-1 1.6 0v.6c.1-.9 1.5-.9 1.6.1v.8c.2-.8 1.4-.7 1.4.2v4.500c0 2.600-1 4-3.500 4s-2.900-1-4.600-4z" fill="#fff" stroke="#8a8a8a" stroke-width="0.7"/>
<rect x="176.4" y="570.8" width="16.8" height="18.6" fill="#c9d7f1" stroke="#93aad6" stroke-width="0.7"/>
<circle cx="184.8" cy="580" r="2.5" fill="#d81828"/><path d="M179.700 578c1-3.500 6-5 9.500-2.500M190.200 582c-1 3.500-6 5-9.500 2.500" stroke="#1c3c4c" stroke-width="1.100" fill="none"/><path d="M188.200 574.300l1.800 1.500-2.200.6zM181.700 585.700l-1.800-1.500 2.200-.6z" fill="#1c3c4c"/><path d="M180 582.500c-.8-1-.8-3 0-4.500M189.700 577.500c.8 1 .8 3 0 4.500" stroke="#1c3c4c" stroke-width="0.800" fill="none"/>
<circle cx="202.500" cy="579.800" r="6.200" fill="#fdfdf8" stroke="#3a3a3a" stroke-width="0.900"/><path d="M200.200 575.800l6 4-6 4z" fill="#1c50e8" stroke="#0c2ca8" stroke-width="0.500"/>
<rect x="212" y="570.8" width="115.5" height="17" fill="#ffffff" />
<text x="241.100" y="581.400" font-size="8" fill="#1a1a1a" textLength="57.600" lengthAdjust="spacingAndGlyphs">45,83; 3,36; 9,34</text>
<rect x="330" y="574" width="8" height="8" fill="#9cc8c8" stroke="#7ab0b0" stroke-width="0.500"/><rect x="334.200" y="577.600" width="8.800" height="7.800" fill="#f0a030" stroke="#d08818" stroke-width="0.500"/>
<path d="M350 573.300h5.500l2.800 2.800v8.600h-8.300z" fill="#fff" stroke="#8a8a8a" stroke-width="0.800"/><circle cx="356.200" cy="582.500" r="2.700" fill="#c8c818" stroke="#3a3a10" stroke-width="0.900"/><path d="M356.200 581v1.600l1.200.6" stroke="#222" stroke-width="0.600" fill="none"/><path d="M355 575.500v3" stroke="#4a6ac8" stroke-width="0.600"/>
<text x="366" y="578" font-size="5.600" fill="#bdb9ab" textLength="11.300" lengthAdjust="spacingAndGlyphs">DPZ</text><path d="M366 580.500c1 3 3 4 5.600 4s4.600-1 5.600-4" stroke="#c4c0b2" stroke-width="0.800" fill="none"/>
<path d="M386.500 573.500v8h7M386.500 581.500l-4 3.800" stroke="#111" stroke-width="1.100" fill="none"/><path d="M385 575l1.500-2.200 1.500 2.200zM392.500 580l2.200 1.500-2.200 1.500zM381.800 583.500l.4 2.200 2-.6z" fill="#111"/><text x="381.800" y="575.800" font-size="4.600" font-weight="bold" fill="#2a3cd0">z</text><text x="391" y="578.600" font-size="4.600" font-weight="bold" fill="#2a3cd0">y</text><text x="386.800" y="586.600" font-size="4.600" font-weight="bold" fill="#2a3cd0">x</text>
<path d="M399.700 579l2.100 2.300 2.100-2.300z" fill="#111"/>
<path d="M409 577.200l2.400-2.200h8.200l-2.400 2.200z" fill="#f04848"/><path d="M409 577.200h8.200v6.800h-8.200z" fill="#e01010"/><path d="M417.200 577.200l2.400-2.200v6.600l-2.400 2.400z" fill="#a80808"/>
<path d="M425.700 579l2.100 2.300 2.100-2.300z" fill="#111"/>
<circle cx="440.800" cy="579.600" r="6" fill="url(#gHelp)" stroke="#1848b0" stroke-width="0.600"/><text x="438.300" y="583" font-size="9" font-weight="bold" fill="#fff">?</text>
<path d="M451.700 573v14" stroke="#cfcbb8" stroke-width="0.800"/><path d="M452.500 573v14" stroke="#fff" stroke-width="0.600"/>
<g fill="#b5b29f"><rect x="778" y="602.5" width="1.4" height="1.4"/><rect x="775.2" y="602.5" width="1.4" height="1.4"/><rect x="778" y="599.7" width="1.4" height="1.4"/><rect x="772.4" y="602.5" width="1.4" height="1.4"/><rect x="775.2" y="599.7" width="1.4" height="1.4"/><rect x="778" y="596.9" width="1.4" height="1.4"/></g>
<text x="0.800" y="601.800" font-size="7" fill="#111" stroke="#111" stroke-width="0.12" textLength="221" lengthAdjust="spacingAndGlyphs">Aztec Informatica s.r.l. * Corso Umberto I, 43 - 87050 Casole Bruzio (CS)</text>
<text x="226" y="601.800" font-size="7" fill="#111" stroke="#111" stroke-width="0.12">-</text>
<text x="233" y="601.800" font-size="7" fill="#111" stroke="#111" stroke-width="0.12" textLength="43.600" lengthAdjust="spacingAndGlyphs">www.aztec.it *</text>
<text x="283.200" y="601.800" font-size="7" fill="#111" stroke="#111" stroke-width="0.12" textLength="44.600" lengthAdjust="spacingAndGlyphs">aztec@aztec. it</text>
</svg>
</body></html>
